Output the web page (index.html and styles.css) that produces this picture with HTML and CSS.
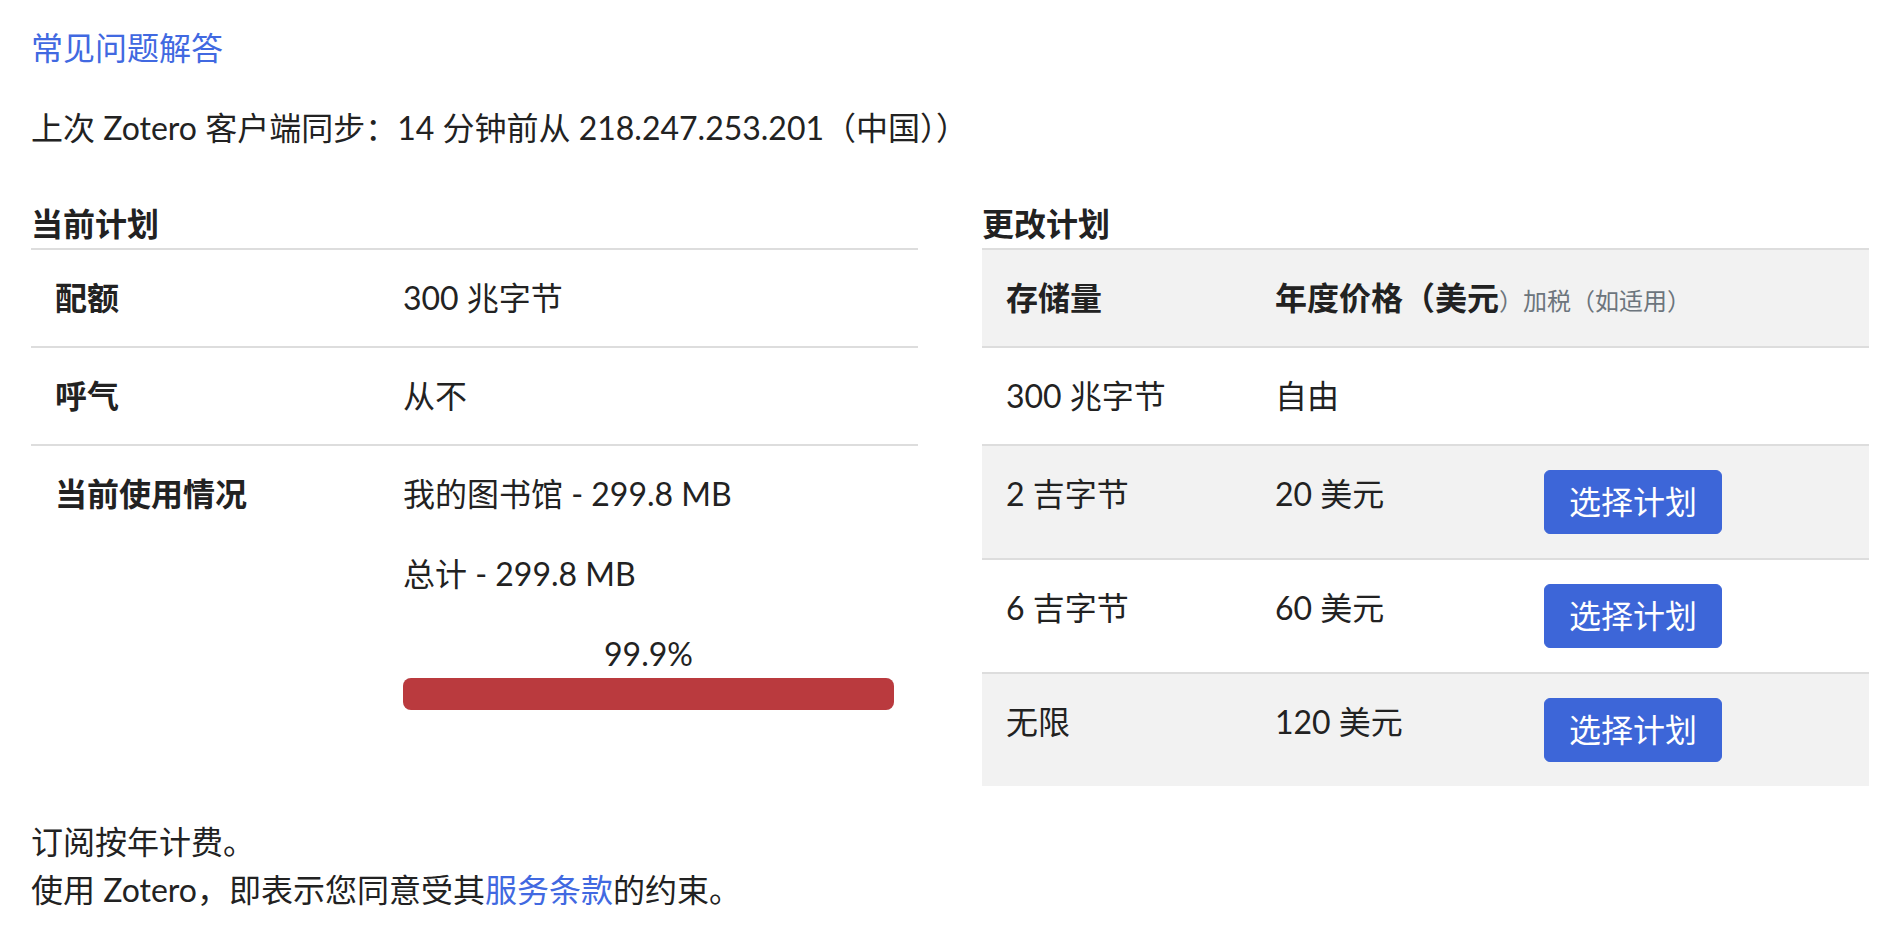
FILE: index.html
```html
<!DOCTYPE html>
<html lang="zh-CN">
<head>
<meta charset="utf-8">
<title>存储</title>
<link rel="stylesheet" href="styles.css">
</head>
<body>
<div class="page">
  <p class="faq"><a class="link" href="#">常见问题解答</a></p>
  <p class="sync">上次 Zotero 客户端同步：14 分钟前从 218.247.253.201（中国））</p>

  <div class="plans">
    <section class="plan-col">
      <h2 class="plan-title">当前计划</h2>
      <table class="plan-table current">
        <tbody>
          <tr>
            <th class="label">配额</th>
            <td>300 兆字节</td>
          </tr>
          <tr>
            <th class="label">呼气</th>
            <td>从不</td>
          </tr>
          <tr>
            <th class="label">当前使用情况</th>
            <td>
              <p class="usage-line">我的图书馆 - 299.8 MB</p>
              <p class="usage-line">总计 - 299.8 MB</p>
              <div class="meter">
                <div class="meter-label">99.9%</div>
                <div class="meter-track"><div class="meter-fill" style="width: 99.9%"></div></div>
              </div>
            </td>
          </tr>
        </tbody>
      </table>
    </section>

    <section class="plan-col">
      <h2 class="plan-title">更改计划</h2>
      <table class="plan-table change">
        <thead>
          <tr>
            <th class="col-storage">存储量</th>
            <th class="col-price">年度价格（美元<small class="muted">）加税（如适用）</small></th>
            <th class="col-action"></th>
          </tr>
        </thead>
        <tbody>
          <tr>
            <td>300 兆字节</td>
            <td>自由</td>
            <td></td>
          </tr>
          <tr>
            <td>2 吉字节</td>
            <td>20 美元</td>
            <td><button class="btn" type="button">选择计划</button></td>
          </tr>
          <tr>
            <td>6 吉字节</td>
            <td>60 美元</td>
            <td><button class="btn" type="button">选择计划</button></td>
          </tr>
          <tr>
            <td>无限</td>
            <td>120 美元</td>
            <td><button class="btn" type="button">选择计划</button></td>
          </tr>
        </tbody>
      </table>
    </section>
  </div>

  <p class="note">订阅按年计费。<br>使用 Zotero，即表示您同意受其<a class="link" href="#">服务条款</a>的约束。</p>
</div>
</body>
</html>
```

FILE: styles.css
```css
html, body {
  margin: 0;
  padding: 0;
  background: #ffffff;
}

body {
  font-family: "Lato", "Noto Sans CJK SC", sans-serif;
  font-size: 32px;
  line-height: 48px;
  color: #222222;
}

.page {
  padding: 24px 27px 0 31px;
}

p {
  margin: 0 0 32px 0;
}

.link {
  color: #4169e1;
  text-decoration: none;
}

.plans {
  display: grid;
  grid-template-columns: 887px 887px;
  column-gap: 64px;
  align-items: start;
}

.plan-title {
  margin: 16px 0 0 0;
  font-size: 32px;
  line-height: 48px;
  font-weight: 700;
  color: #222222;
}

.plan-table {
  width: 100%;
  border-collapse: collapse;
  margin-bottom: 32px;
  table-layout: fixed;
}

.plan-table th,
.plan-table td {
  padding: 24px;
  border-top: 2px solid #dddddd;
  vertical-align: top;
  text-align: left;
  font-size: 32px;
  line-height: 48px;
}

.plan-table th {
  font-weight: 700;
}

.current .label {
  width: 300px;
}

.usage-line {
  margin: 0 0 32px 0;
}

.meter-label {
  text-align: center;
  line-height: 48px;
}

.meter-track {
  height: 32px;
  border-radius: 8px;
  background: #e9ecef;
  overflow: hidden;
  display: flex;
}

.meter-fill {
  background: #ba3a3e;
  height: 100%;
}

.change .col-storage {
  width: 221px;
}

.change .col-price {
  width: 221px;
  white-space: nowrap;
}

.change thead tr {
  background: #f2f2f2;
}

.change tbody tr:nth-child(even) {
  background: #f2f2f2;
}

.muted {
  font-size: 24px;
  line-height: 24px;
  font-weight: 400;
  color: #6c757d;
}

.btn {
  font-family: "Lato", "Noto Sans CJK SC", sans-serif;
  font-size: 32px;
  line-height: 48px;
  padding: 7px 24px;
  color: #ffffff;
  background: #3d66d8;
  border: 1px solid #3d66d8;
  border-radius: 6px;
  display: block;
  cursor: pointer;
}

.note {
  margin: 0;
}
```
